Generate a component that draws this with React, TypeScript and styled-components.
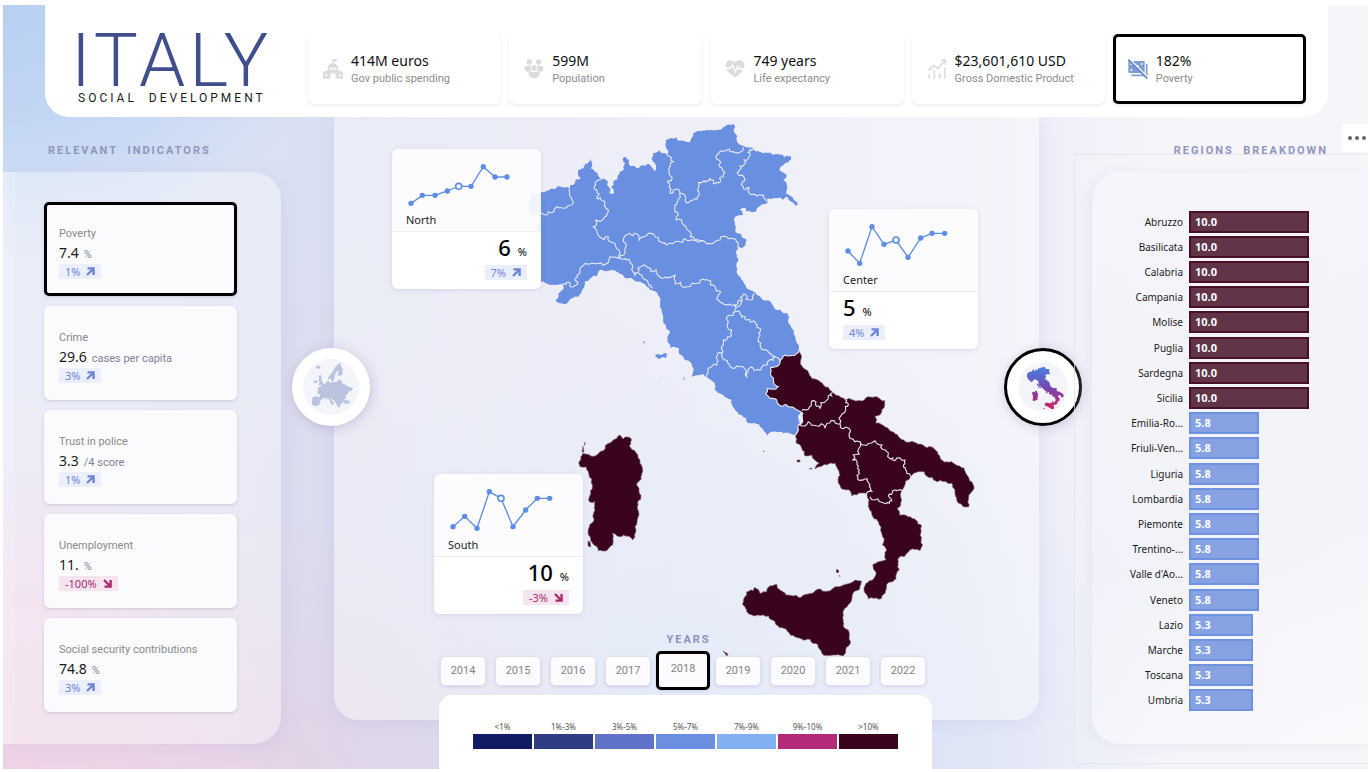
import React from "react";
import styled, { createGlobalStyle, css } from "styled-components";

const GlobalStyle = createGlobalStyle`
  *, *::before, *::after { box-sizing: border-box; }
  body { margin: 0; background: #fff; font-family: "Noto Sans", "Open Sans", sans-serif; color: #1b1b1b; }
  button { font: inherit; color: inherit; text-align: left; padding: 0; border: 0; cursor: pointer; }
  h1, h2, p, ul, ol { margin: 0; padding: 0; list-style: none; }
`;

/* ---------- page ---------- */

const Page = styled.div`
  min-height: 100vh;
  display: flex;
  padding: 5px 2px 3px 3px;
`;

const Frame = styled.div`
  flex: 1;
  min-width: 0;
  display: flex;
  flex-direction: column;
  position: relative;
  overflow: hidden;
  background:
    radial-gradient(ellipse 24% 34% at 0% 0%, #b7cff2 0%, rgba(192, 213, 244, 0.9) 45%, rgba(210, 222, 245, 0) 100%),
    radial-gradient(ellipse 22% 50% at 0% 100%, #efd3e7 0%, rgba(238, 212, 231, 0.8) 45%, rgba(232, 212, 232, 0) 100%),
    radial-gradient(ellipse 30% 34% at 18% 100%, rgba(228, 210, 229, 0.9) 0%, rgba(228, 210, 229, 0) 100%),
    radial-gradient(ellipse 34% 50% at 16% 12%, rgba(218, 226, 243, 0.95) 0%, rgba(220, 226, 244, 0) 100%),
    radial-gradient(ellipse 36% 64% at 50% 100%, rgba(205, 220, 242, 0.85) 0%, rgba(205, 220, 242, 0) 100%),
    linear-gradient(90deg, #dfe3f3 0%, #dcdcee 23%, #e3e3f4 45%, #eaeaf7 70%, #f4f4fa 84%, #f6f5fa 100%);
`;

const Header = styled.header`
  display: flex;
  margin: 0 40px 0 42px;
  padding: 29px 22px 13px 32px;
  background: #fff;
  border-radius: 0 0 24px 24px;
  position: relative;
  z-index: 2;
`;

const Brand = styled.div`
  width: 231px;
  flex: none;
  font-family: Roboto, sans-serif;
`;

const Title = styled.h1`
  margin-left: -6px;
  font-size: 74px;
  line-height: 54px;
  font-weight: 300;
  letter-spacing: 4px;
  color: #3f4e8d;
`;

const Subtitle = styled.p`
  font-size: 12px;
  line-height: 12px;
  margin-top: 4px;
  padding-left: 1px;
  letter-spacing: 3px;
  white-space: nowrap;
`;

const StatList = styled.ul`
  flex: 1;
  display: grid;
  grid-template-columns: repeat(5, 1fr);
  gap: 8px;
`;

const selectedFrame = css`
  border: 3px solid #000;
  border-radius: 5px;
`;

const StatCard = styled.button<{ $selected?: boolean }>`
  width: 100%;
  height: 70px;
  display: flex;
  align-items: center;
  gap: 8px;
  padding: 0 12px;
  background: #fff;
  border: 3px solid transparent;
  border-radius: 6px;
  box-shadow: 0 2px 3px rgba(60, 60, 120, 0.08), 0 0 2px rgba(60, 60, 120, 0.04);
  svg { flex: none; }
  ${(p) => p.$selected && selectedFrame}
`;

const StatText = styled.span`
  display: flex;
  flex-direction: column;
  padding-top: 2px;
  white-space: nowrap;
`;

const StatValue = styled.span`
  font-size: 14px;
  line-height: 18px;
  color: #111;
`;

const StatLabel = styled.span`
  font-family: Roboto, sans-serif;
  font-size: 11px;
  line-height: 18px;
  color: #8c8c8c;
`;

/* ---------- columns ---------- */

const Main = styled.main`
  flex: 1;
  display: grid;
  grid-template-columns: 278px minmax(705px, 1fr) 276px;
  column-gap: 53px;
`;

const Column = styled.section`
  display: flex;
  flex-direction: column;
  padding: 26px 0 25px;
  position: relative;
`;

const SectionTitle = styled.h2<{ $right?: boolean }>`
  font-family: Roboto, sans-serif;
  font-size: 11px;
  line-height: 16px;
  font-weight: 700;
  letter-spacing: 2px;
  color: #8f96bd;
  padding: ${(p) => (p.$right ? "0 40px 0 0" : "0 0 0 45px")};
  text-align: ${(p) => (p.$right ? "right" : "left")};
  margin-bottom: 13px;
  white-space: nowrap;
`;

const IndicatorPanel = styled.ul`
  display: flex;
  flex-direction: column;
  gap: 10px;
  padding: 30px 44px 32px 41px;
  border-radius: 0 28px 28px 0;
  background: linear-gradient(90deg, rgba(255, 255, 255, 0.46) 12px, rgba(255, 255, 255, 0.36) 12px);
  box-shadow: 4px 4px 18px rgba(150, 140, 200, 0.11);
`;

const IndicatorCard = styled.button<{ $selected?: boolean }>`
  width: 100%;
  height: 94px;
  display: block;
  padding: 19px 12px;
  background: #fbfbfd;
  border: 3px solid #fbfbfd;
  border-radius: 6px;
  box-shadow: 0 1px 3px rgba(110, 100, 160, 0.25);
  ${(p) => p.$selected && selectedFrame}
`;

const IndicatorLabel = styled.span`
  display: block;
  font-family: Roboto, sans-serif;
  font-size: 11px;
  line-height: 20px;
  color: #8a8a8a;
`;

const IndicatorValue = styled.span`
  display: flex;
  align-items: baseline;
  gap: 5px;
  font-size: 14px;
  line-height: 18px;
`;

const Unit = styled.span`
  font-family: Roboto, sans-serif;
  font-size: 11px;
  color: #7d8296;
`;

const Badge = styled.span<{ $down?: boolean }>`
  display: inline-flex;
  align-items: center;
  gap: 6px;
  height: 15px;
  padding: 0 6px;
  font-size: 11px;
  line-height: 15px;
  vertical-align: top;
  color: ${(p) => (p.$down ? "#a92b74" : "#6b86d9")};
  background: ${(p) => (p.$down ? "#f6e5ee" : "#ebeffc")};
`;

/* ---------- centre ---------- */

const Center = styled.section`
  display: flex;
  flex-direction: column;
  align-items: center;
`;

const MapPanel = styled.div`
  flex: 1;
  align-self: stretch;
  display: flex;
  flex-direction: column;
  align-items: center;
  position: relative;
  border-radius: 0 0 24px 24px;
  background: rgba(255, 255, 255, 0.4);
  box-shadow: 0 2px 18px rgba(130, 120, 210, 0.13);
`;

const Canvas = styled.div`
  width: 705px;
  height: 515px;
  position: relative;
`;

const MapSvg = styled.svg`
  display: block;
  width: 705px;
  height: 515px;
  overflow: visible;
`;

const RoundButton = styled.button<{ $side: "left" | "right"; $selected?: boolean }>`
  position: absolute;
  top: 231px;
  ${(p) => (p.$side === "left" ? "left: -42px;" : "right: -43px;")}
  width: 78px;
  height: 78px;
  display: flex;
  align-items: center;
  justify-content: center;
  border-radius: 50%;
  background: #fff;
  border: 3px solid ${(p) => (p.$selected ? "#000" : "#fff")};
  box-shadow: 1px 2px 12px rgba(90, 80, 150, 0.25);
`;

const ZoneCard = styled.article<{ $x: number; $y: number }>`
  position: absolute;
  left: ${(p) => p.$x}px;
  top: ${(p) => p.$y}px;
  width: 149px;
  height: 140px;
  border-radius: 6px;
  overflow: hidden;
  box-shadow: 0 1px 4px rgba(100, 100, 170, 0.16);
`;

const ZoneTop = styled.div`
  position: relative;
  height: 83px;
  background: rgba(253, 253, 255, 0.92);
  border-bottom: 1px solid #ececf2;
  svg { display: block; }
`;

const ZoneName = styled.h2`
  position: absolute;
  left: 14px;
  bottom: 3px;
  font-size: 11px;
  line-height: 16px;
  font-weight: 400;
`;

const ZoneBottom = styled.div<{ $right?: boolean }>`
  height: 57px;
  padding: 3px 14px 0;
  background: #fff;
  text-align: ${(p) => (p.$right ? "right" : "left")};
`;

const ZoneValue = styled.p`
  margin-bottom: 6px;
  font-size: 22px;
  line-height: 24px;
  height: 24px;
  font-weight: 500;
  color: #000;
  span { font-size: 11px; font-weight: 400; margin-left: 7px; }
`;

const YearsTitle = styled.h2`
  position: relative;
  padding-left: 4px;
  font-family: Roboto, sans-serif;
  font-size: 11px;
  line-height: 16px;
  font-weight: 700;
  letter-spacing: 2px;
  color: #8b92c0;
`;

const Years = styled.div`
  position: relative;
  display: flex;
  align-items: center;
  gap: 9px;
  height: 39px;
  margin: 3px 7px 30px 0;
`;

const YearButton = styled.button<{ $selected?: boolean }>`
  width: 46px;
  height: 30px;
  text-align: center;
  font-family: Roboto, sans-serif;
  font-size: 11px;
  color: #858585;
  background: #fcfcfe;
  border: 1px solid #e0e0f0;
  border-radius: 5px;
  box-shadow: 0 1px 3px rgba(110, 100, 190, 0.2);
  ${(p) =>
    p.$selected &&
    css`
      ${selectedFrame}
      width: 54px;
      height: 39px;
      margin: 0 -4px;
      padding-bottom: 5px;
    `}
`;

const Legend = styled.ul`
  position: relative;
  display: grid;
  grid-template-columns: repeat(7, 59px);
  gap: 2px;
  margin-top: -25px;
  margin-right: 2px;
  height: 74px;
  padding: 25px 34px 0;
  background: #fff;
  border-radius: 14px 14px 0 0;
`;

const LegendItem = styled.li<{ $color: string }>`
  font-size: 8px;
  line-height: 14px;
  text-align: center;
  color: #555;
  &::after {
    content: "";
    display: block;
    height: 15px;
    background: ${(p) => p.$color};
  }
`;

/* ---------- regions ---------- */

const GhostBox = styled.div`
  position: absolute;
  left: -18px;
  right: -2px;
  top: 37px;
  bottom: 5px;
  border: 1px solid rgba(225, 225, 235, 0.7);
  background: rgba(255, 255, 255, 0.12);
  pointer-events: none;
`;

const RegionPanel = styled.div`
  position: relative;
  padding: 37px 0 31px;
  border-radius: 28px 0 0 28px;
  background: linear-gradient(160deg, rgba(246, 245, 251, 0.9), rgba(240, 240, 249, 0.6) 60%, rgba(250, 250, 253, 0.8));
  box-shadow: -2px 2px 14px rgba(150, 150, 200, 0.12);
`;

const RegionList = styled.ul`
  display: grid;
  grid-auto-rows: 1fr;
  height: 504px;
`;

const RegionRow = styled.li`
  display: flex;
  align-items: center;
  gap: 6px;
  font-size: 10px;
`;

const RegionName = styled.span`
  width: 91px;
  text-align: right;
  white-space: nowrap;
`;

const RegionBar = styled.span<{ $high: boolean }>`
  height: 22px;
  line-height: 18px;
  padding-left: 4px;
  font-family: "Open Sans", sans-serif;
  font-size: 11px;
  font-weight: 700;
  color: #fff;
  border: 2px solid ${(p) => (p.$high ? "#4a0f2b" : "#6f93e0")};
  background: ${(p) => (p.$high ? "#623447" : "#86a2e3")};
`;

const MoreButton = styled.button`
  position: absolute;
  right: -2px;
  top: 119px;
  width: 28px;
  height: 28px;
  background: #fff;
  z-index: 3;
  svg { display: block; }
`;

/* ---------- map geometry ---------- */

type Pt = [number, number];

const parse = (s: string): Pt[] => s.trim().split(/\s+/).map((p) => p.split(",").map(Number) as Pt);

const noise = (a: Pt, b: Pt, k: number) => {
  const v = Math.sin(a[0] * 12.9898 + a[1] * 78.233 + b[0] * 37.719 + b[1] * 4.581 + k * 9.17) * 43758.5453;
  return v - Math.floor(v) - 0.5;
};

/* Adds coastline-like detail by repeatedly displacing the middle of each segment. */
const split = (a: Pt, b: Pt, amount: number): Pt[] => {
  const dx = b[0] - a[0];
  const dy = b[1] - a[1];
  if (Math.hypot(dx, dy) < 3.2) return [b];
  const n = noise(a, b, 1) * amount;
  const mid: Pt = [(a[0] + b[0]) / 2 - dy * n, (a[1] + b[1]) / 2 + dx * n];
  return [...split(a, mid, amount), ...split(mid, b, amount)];
};

const rough = (s: string, amount: number, closed = false) => {
  const pts = parse(s);
  const out: Pt[] = [pts[0]];
  for (let i = 1; i < pts.length; i++) out.push(...split(pts[i - 1], pts[i], amount));
  return "M" + out.map((p) => p[0].toFixed(1) + " " + p[1].toFixed(1)).join("L") + (closed ? "Z" : "");
};

const ABRUZZO_EDGE =
  "795,436 796.7,433.3 798.3,425 802.7,421.7 802.7,413.3 793.3,407.3 779.3,405 776.7,400 765.7,394 767.3,388.3 776,389 778.3,386.7 770.7,375 770.7,367.3 779,365 780,361.7 785,355 799,350.7";

const NORTH_LAND =
  "529,200 533,193 541,192 546.7,190.7 550,189 555,189.3 558.3,186 562.7,187.3 569.3,188.3 570,185 575,183.3 576.7,179.3 580.7,177.7 578.3,170 583.3,168.3 585,164 590.7,159.3 590.7,168.3 595,171.7 599,176.7 601.7,179 606,180 607.7,186 610,188.3 609.3,192.7 614,193.3 613.3,181.7 618.3,175 623.3,170 622.7,158.3 626,156.7 629,160 630,166 636.7,168.3 645,166 649.3,164 653.3,170 656,170.7 651.7,158.3 653.3,152.7 659.3,150 661.7,153.3 667.3,155 666,140 670,138.3 676.7,137.3 678.3,140.7 690,142.3 693.3,133.3 698.3,130.7 706.7,130 716.7,130 725,126.7 733.3,124 734,131.7 737.3,136 736.7,140 740.7,145 753.3,149.3 766.7,152.7 778.3,154 790.7,156 790.7,160 785,163.3 779.3,169.3 786.7,175 783.3,180 786.7,183.3 787.3,186.7 786,194 793.3,198.3 797.7,203.3 795.7,206 791.7,201.7 786,196.7 782.7,200 767.3,198.3 767.3,203.3 758.3,207.3 746.7,211.7 746,208.3 740,209.3 743.3,215 736.7,216 734,220 736,226.7 737.3,233.3 743.3,238.3 746.7,240 741.7,248.3 737.3,245 736,253.3 737.3,268.3 741.7,280 750,290 756.7,295 775,309.3 783.3,313.3 787.3,313.3 791.7,328.3 798.3,350.7 800,380 804,405 800,428 794,435 783.3,433.3 776.7,431.7 767.3,435.7 763.3,430 760,426.7 748.3,423.3 741.7,415 734,408.3 731.7,400 720,393.3 713.3,381.7 706.7,376.7 700,375 692.3,376.7 694,370 685,360 679.3,354 679,348.3 673.3,346.7 670,347.7 670,331.7 663.3,318.3 660,306.7 659.3,296.7 653.3,290.7 646.7,286.7 636.7,281.7 621.7,274 608.3,270.7 600,270 590,278.3 583.3,288.3 578.3,296.7 568.3,301.7 560,303.3 555.7,300.7 558.3,293.3 563.3,289.3 562.3,284 550,285 541,281.7 530,276 528,250 536,232 541,222 533,214 529,208";

const SOUTH_LAND =
  ABRUZZO_EDGE +
  " 800.7,360 808.3,371.7 820,381.7 828.3,387.3 832.3,392.7 845,399.3 861.7,401 880,399 885,400.7 884.3,407.3 875,416 876,423.3 890,430.7 920,444 940,456.7 955,464.3 968.3,476.7 973.3,490 969,506.7 956.7,500 955,493.3 955,490 951.7,483.3 936.7,481.7 926,475.7 924.3,471.7 918.3,471.7 910.7,476.7 903.3,488.3 901.7,500 897.3,508.3 899.3,515 908.3,516.7 921.7,526 920,535 922.7,545 920,550.7 910,550 900,556.7 899.3,570 888.3,582.7 881.7,598.3 868.3,599 865,593.3 866,583.3 873.3,579.3 875.7,571.7 872.7,565 878.3,561.7 886,560 886.7,550 882.3,545 881.7,533.3 878.3,521.7 871.7,511.7 869.3,500 866,493.3 856.7,495 851.7,496 850,490.7 838.3,483.3 840,475 835,463.3 826.7,465 815,469 819.3,463.3 811.7,455 805,456 801.7,448.3 795,436";

const SICILY =
  "861.7,581 850,583.3 838.3,586.7 830,590.7 806.7,594.3 793.3,596 780,590 776.7,584.3 768.3,587.3 766.7,591.7 760,593.3 755,587.3 753.3,590.7 746.7,591.7 744,598.3 742.7,605 746.7,611.7 751.7,615 763.3,615 771.7,620 783.3,628.3 800,638.3 810,639.3 821.7,653.3 833,655 843.3,656 845.7,650 850.7,641.7 848.3,630 843.3,626.7 843.3,620 850,603.3 860,588.3 861.7,581";

const SARDINIA =
  "620,435 623,439 628,437 631.7,440 629,446 634,450 640,460 642.7,471.7 636.7,485 639,491.7 637.3,506.7 638.3,516.7 635,526.7 632.7,540 623.3,535 617,536 612.7,533.3 612.7,545 606.7,550.7 598.3,550.7 593,544 590,536.7 589.3,526.7 595,510 595,501.7 589.3,501.7 592.3,486.7 588.3,471.7 586,467 580,466.7 580,460.7 582.7,453.3 595,456 603.3,450.7 610,442.7 616.7,438.3 620,435";

const BORDERS = [
  "569.3,188.3 570.7,196.7 571.7,205 565,208.3 556.7,206.7 548.3,211.7 541,212.7",
  "601.7,179 596.7,190 596.7,198.3 605,216.7 595,220 593.3,226.7 600,237.3 608.3,236.7 615,243.3 620,253.3 619.3,258.3",
  "562.3,284 573.3,286.7 577,275 581.7,266.7 598.3,263.3 603.3,265 610,256.7 619.3,258.3 630,262.7 631.7,269.3 641.7,275 648.3,283.3 652.7,288.3",
  "619.3,258.3 625,250 623.3,241.7 630,233.3 648.3,233.3 658.3,237.3 670,243.3 690,240.7 703.3,240.7 711.7,244 720,240 736.7,241.7 738,246",
  "638.3,271.7 646.7,266.7 661.7,278.3 683.3,287.3 696.7,283.3 705,280 715,286.7 716.7,298.3 730,304 741.7,301.7 743.3,294 751.7,300 754,293.3",
  "667.3,155 673.3,161.7 667.3,181.7 670,193.3 680,193.3 675,205 676,220 690,231.7 703.3,240.7",
  "680,193.3 685,200.7 693.3,200 698.3,188.3 713.3,183.3 723.3,176.7 719.3,160 729.3,149.3 735,152.7 743.3,147.3",
  "753.3,149.3 748.3,158.3 739.3,170 743.3,186.7 750,194 763.3,195 767.3,201.7",
  "741.7,301.7 734,305 735,311.7 728.3,321.7 731.7,330 723.3,340 722.7,351.7 717.3,355 716.7,365 708.3,368.3 706.7,376.7",
  "735,311.7 745,316.7 755,321.7 760,335 760.7,346.7 775,356.7 763.3,365 746.7,376.7 736.7,366 725,360 722.7,351.7",
  "775,356.7 780,361.7",
  ABRUZZO_EDGE,
  "801.7,410.7 808.3,409.3 811.7,401 816,402 820,408.3 832.3,392.7",
  "845,399.3 845.7,410 839,418.3 840,424",
  "799.3,425 805,426 808.3,421.7 825,427.7 840,424",
  "840,424 850,438.3 860.7,443.3 875,440.7 886.7,451.7 895,460.7 905,460 906.7,473.3 910.7,476.7",
  "860.7,443.3 859.3,454 853.3,455 859.3,470 870,485 866.7,495",
  "870,496.7 880,501.7 891.7,500.7 895,490 902.3,490.7",
];

const ISLANDS = {
  blue: "M655 355l3 -1 3 1 4-2 2 1-1 4-3-1-4 2-3-2zM643 341l2 1-1 2zM683 376l2 3-1 1zM661 378l1 1h-1z",
  dark: "M797 460l3 0 0 2-3 0zM809 469l3-1 0 1zM583 446l-1 6 2 0zM585 442l-1 3 1 0zM588 541l2 1 1 5-3-1zM837 569l2 2-1 2-2-1zM839 575l1 2zM723 651l5 3-1 2zM763 451h1v1z",
};

const BLUE_PATH = rough(NORTH_LAND, 0.45, true) + ISLANDS.blue;
const DARK_PATH = [SOUTH_LAND, SICILY, SARDINIA].map((s) => rough(s, 0.4, true)).join("") + ISLANDS.dark;

const ItalyMap = () => (
  <MapSvg viewBox="334 117 705 515" role="img" aria-label="Map of Italy by region">
    <path d={BLUE_PATH} fill="#698fe0" />
    <path d={DARK_PATH} fill="#3a041f" stroke="#8d6b82" strokeWidth="0.6" />
    {BORDERS.map((b) => (
      <path key={b} d={rough(b, b === ABRUZZO_EDGE ? 0.4 : 0.8)} fill="none" stroke="#e6e9f7" strokeWidth="1.1" />
    ))}
  </MapSvg>
);

/* ---------- icons ---------- */

const GovIcon = () => (
  <svg width="20" height="20" viewBox="0 0 60 60" fill="#dcdcdc" fillRule="evenodd">
    <path d="M28 0h13v8H31v4c9 2 15 8 15 17v5l9 3c3 1 5 4 5 7v15H38V48c0-4-3-7-8-7s-8 3-8 7v11H0V44c0-3 2-6 5-7l9-3v-5c0-9 6-15 14-17zM20 25v9h4v-9zm8 0v9h4v-9zm8 0v9h4v-9zM7 46v6h5v-6zm41 0v6h5v-6z" />
  </svg>
);

const PeopleIcon = () => (
  <svg width="20" height="20" viewBox="0 0 60 60" fill="#dcdcdc">
    <circle cx="16" cy="9" r="8" />
    <circle cx="44" cy="9" r="8" />
    <circle cx="30" cy="27" r="8" />
    <path d="M2 30c-2-6 3-10 7-10h10c3 0 2 3 1 6-1 5 1 9 0 12H9c-4 0-6-3-7-8zM58 30c2-6-3-10-7-10H41c-3 0-2 3-1 6 1 5-1 9 0 12h11c4 0 6-3 7-8zM13 39h34c1 11-5 19-17 19S12 50 13 39z" />
  </svg>
);

const HeartIcon = () => (
  <svg width="20" height="20" viewBox="0 0 60 60">
    <path d="M30 55C20 48 2 34 2 20 2 10 9 4 17 4c6 0 10 3 13 7 3-4 7-7 13-7 8 0 15 6 15 16 0 14-18 28-28 35z" fill="#dcdcdc" />
    <path d="M0 27h17l5-9 9 20 7-15 4 7h18" fill="none" stroke="#fff" strokeWidth="4" />
  </svg>
);

const GrowthIcon = () => (
  <svg width="20" height="20" viewBox="0 0 60 60" fill="none" stroke="#dcdcdc" strokeWidth="5">
    <path d="M5 35l16-16 12 10L52 6M41 3h14v14M6 59V45M22 59V34M38 59V43M53 59V25" />
  </svg>
);

const NoMoneyIcon = () => (
  <svg width="20" height="20" viewBox="0 0 60 60" fill="none">
    <rect x="1" y="6" width="49" height="36" rx="3" fill="#7d9dd2" />
    <path d="M56 15v34H10" stroke="#7d9dd2" strokeWidth="5" />
    <circle cx="10" cy="15" r="3" fill="#fff" />
    <circle cx="41" cy="15" r="3" fill="#fff" />
    <circle cx="10" cy="33" r="3" fill="#fff" />
    <circle cx="27" cy="22" r="5" fill="#fff" />
    <path d="M4 0l56 57" stroke="#fff" strokeWidth="6" />
    <path d="M1 2l57 57" stroke="#6285c4" strokeWidth="5" />
  </svg>
);

const Arrow = ({ down }: { down?: boolean }) => (
  <svg width="9" height="9" viewBox="0 0 9 9" fill="none" stroke="currentColor" strokeWidth="2.4">
    {down ? <path d="M1 1l6 6M7.6 1v6.6H1.5" /> : <path d="M1 8l6-6M1.5 1.4h6.1V8" />}
  </svg>
);

const EuropeIcon = () => (
  <svg width="56" height="56" viewBox="72 87 168 168">
    <circle cx="156" cy="171" r="84" fill="#f4f5fa" />
    <path
      fill="#b9c3df"
      d="M111 107l10 1 3 4-4 5-8-2zM120 137l6-2 2 6 0 10 4 8 0 6-11 1-3-4 4-3-2-6zM106 153l8-3 1 8-7 2-5-2zM146 150l3-10 10-12 10-18 8-7 8-4 1 10 4 6 1 12-2 8-8 2-6-2 4-10-3-4-6 8-4 9 1 6-5 10-5 0-1-8-4 0zM118 172l10-4 6-6 8-3 3-7 5 1 1 6 10-3 12 0 8-8 6 4 2 8 8 3 8 6 10 3 7 3-4 8-8 1-6 10-4 3 0 9-8 4-4 12-6-1 1 10-6 1-6-12-6-9-6-2 0-5-4 2 10 14-4 5-4-1 0-6-9-12-5-2-10 0-5 5-5 4 0 9-8 5-8 1-8-4 0-14 2-8 9-3 12 3 1-8-8-4zM190 212l8-2 14 2 0 5-6 6-4-2-9-2zM140 203l3 1 0 6-3-1zM150 217l10 1-2 4zM182 220l8 2-2 2-6-1z"
    />
  </svg>
);

const ItalyIcon = () => (
  <svg width="50" height="50" viewBox="391 54 646 646">
    <defs>
      <linearGradient id="italy-fade" x1="0" y1="124" x2="0" y2="656" gradientUnits="userSpaceOnUse">
        <stop offset="0" stopColor="#4a7fe0" />
        <stop offset="0.5" stopColor="#7248b0" />
        <stop offset="1" stopColor="#d11f66" />
      </linearGradient>
    </defs>
    <circle cx="714" cy="377" r="320" fill="#f4f5fa" />
    <path d={BLUE_PATH + DARK_PATH} fill="url(#italy-fade)" stroke="url(#italy-fade)" strokeWidth="14" />
    <path d="M545 190l-33 8-6 30 6 34 33 20z" fill="url(#italy-fade)" />
  </svg>
);

/* ---------- data ---------- */

const STATS = [
  { value: "414M euros", label: "Gov public spending", Icon: GovIcon },
  { value: "599M", label: "Population", Icon: PeopleIcon },
  { value: "749 years", label: "Life expectancy", Icon: HeartIcon },
  { value: "$23,601,610 USD", label: "Gross Domestic Product", Icon: GrowthIcon },
  { value: "182%", label: "Poverty", Icon: NoMoneyIcon, selected: true },
];

const INDICATORS = [
  { label: "Poverty", value: "7.4", unit: "%", change: "1%", selected: true },
  { label: "Crime", value: "29.6", unit: "cases per capita", change: "3%" },
  { label: "Trust in police", value: "3.3", unit: "/4 score", change: "1%" },
  { label: "Unemployment", value: "11.", unit: "%", change: "-100%", down: true },
  { label: "Social security contributions", value: "74.8", unit: "%", change: "3%" },
];

const ZONES = [
  { name: "North", x: 58, y: 32, value: "6", change: "7%", right: true, line: "57,163 91,139 129,139 166,126 200,112 237,112 274,53 309,84 345,84" },
  { name: "Center", x: 495, y: 92, value: "5", change: "4%", line: "57,126 92,163 129,53 165,106 201,93 237,145 275,87 309,73 347,73" },
  { name: "South", x: 100, y: 357, value: "10", change: "-3%", down: true, right: true, line: "57,158 92,127 129,163 166,53 201,73 237,158 275,108 310,73 347,73" },
];

const YEARS = [2014, 2015, 2016, 2017, 2018, 2019, 2020, 2021, 2022];

const LEGEND = [
  ["<1%", "#111b64"],
  ["1%-3%", "#303d85"],
  ["3%-5%", "#6073c8"],
  ["5%-7%", "#6a8fe0"],
  ["7%-9%", "#82b0f1"],
  ["9%-10%", "#b32a78"],
  [">10%", "#3a041f"],
];

const REGIONS: [string, number][] = [
  ["Abruzzo", 10], ["Basilicata", 10], ["Calabria", 10], ["Campania", 10], ["Molise", 10],
  ["Puglia", 10], ["Sardegna", 10], ["Sicilia", 10], ["Emilia-Ro...", 5.8], ["Friuli-Ven...", 5.8],
  ["Liguria", 5.8], ["Lombardia", 5.8], ["Piemonte", 5.8], ["Trentino-...", 5.8], ["Valle d'Ao...", 5.8],
  ["Veneto", 5.8], ["Lazio", 5.3], ["Marche", 5.3], ["Toscana", 5.3], ["Umbria", 5.3],
];

const Sparkline = ({ line }: { line: string }) => (
  <svg width="149" height="82" viewBox="0 0 447 246" aria-hidden="true">
    <polyline points={line} fill="none" stroke="#5b8de8" strokeWidth="4" />
    {parse(line).map(([x, y], i) =>
      i === 4 ? (
        <circle key={i} cx={x} cy={y} r="9" fill="#fff" stroke="#5b8de8" strokeWidth="5" />
      ) : (
        <circle key={i} cx={x} cy={y} r="8" fill="#5b8de8" />
      )
    )}
  </svg>
);

export default function App() {
  return (
    <Page>
      <GlobalStyle />
      <Frame>
        <Header>
          <Brand>
            <Title>ITALY</Title>
            <Subtitle>SOCIAL&nbsp; DEVELOPMENT</Subtitle>
          </Brand>
          <StatList>
            {STATS.map(({ value, label, Icon, selected }) => (
              <li key={label}>
                <StatCard type="button" $selected={selected}>
                  <Icon />
                  <StatText>
                    <StatValue>{value}</StatValue>
                    <StatLabel>{label}</StatLabel>
                  </StatText>
                </StatCard>
              </li>
            ))}
          </StatList>
        </Header>

        <Main>
          <Column>
            <SectionTitle>RELEVANT&nbsp; INDICATORS</SectionTitle>
            <IndicatorPanel>
              {INDICATORS.map((i) => (
                <li key={i.label}>
                  <IndicatorCard type="button" $selected={i.selected}>
                    <IndicatorLabel>{i.label}</IndicatorLabel>
                    <IndicatorValue>
                      {i.value} <Unit>{i.unit}</Unit>
                    </IndicatorValue>
                    <Badge $down={i.down}>
                      {i.change}
                      <Arrow down={i.down} />
                    </Badge>
                  </IndicatorCard>
                </li>
              ))}
            </IndicatorPanel>
          </Column>

          <Center>
            <MapPanel>
              <Canvas>
                <ItalyMap />
                {ZONES.map((z) => (
                  <ZoneCard key={z.name} $x={z.x} $y={z.y}>
                    <ZoneTop>
                      <Sparkline line={z.line} />
                      <ZoneName>{z.name}</ZoneName>
                    </ZoneTop>
                    <ZoneBottom $right={z.right}>
                      <ZoneValue>
                        {z.value}
                        <span>%</span>
                      </ZoneValue>
                      <Badge $down={z.down}>
                        {z.change}
                        <Arrow down={z.down} />
                      </Badge>
                    </ZoneBottom>
                  </ZoneCard>
                ))}
              </Canvas>
              <YearsTitle>YEARS</YearsTitle>
              <Years>
                {YEARS.map((y) => (
                  <YearButton key={y} type="button" $selected={y === 2018}>
                    {y}
                  </YearButton>
                ))}
              </Years>
              <RoundButton type="button" $side="left" aria-label="Europe">
                <EuropeIcon />
              </RoundButton>
              <RoundButton type="button" $side="right" $selected aria-label="Italy">
                <ItalyIcon />
              </RoundButton>
            </MapPanel>
            <Legend>
              {LEGEND.map(([label, color]) => (
                <LegendItem key={label} $color={color}>
                  {label}
                </LegendItem>
              ))}
            </Legend>
          </Center>

          <Column>
            <GhostBox />
            <SectionTitle $right>REGIONS&nbsp; BREAKDOWN</SectionTitle>
            <RegionPanel>
              <RegionList>
                {REGIONS.map(([name, value]) => (
                  <RegionRow key={name}>
                    <RegionName>{name}</RegionName>
                    <RegionBar $high={value >= 10} style={{ width: Math.round(value * 12) }}>
                      {value.toFixed(1)}
                    </RegionBar>
                  </RegionRow>
                ))}
              </RegionList>
            </RegionPanel>
          </Column>
        </Main>
        <MoreButton type="button" aria-label="More options">
          <svg width="28" height="28" viewBox="0 0 28 28" fill="#666">
            <circle cx="8" cy="14" r="2" />
            <circle cx="15" cy="14" r="2" />
            <circle cx="22" cy="14" r="2" />
          </svg>
        </MoreButton>
      </Frame>
    </Page>
  );
}
